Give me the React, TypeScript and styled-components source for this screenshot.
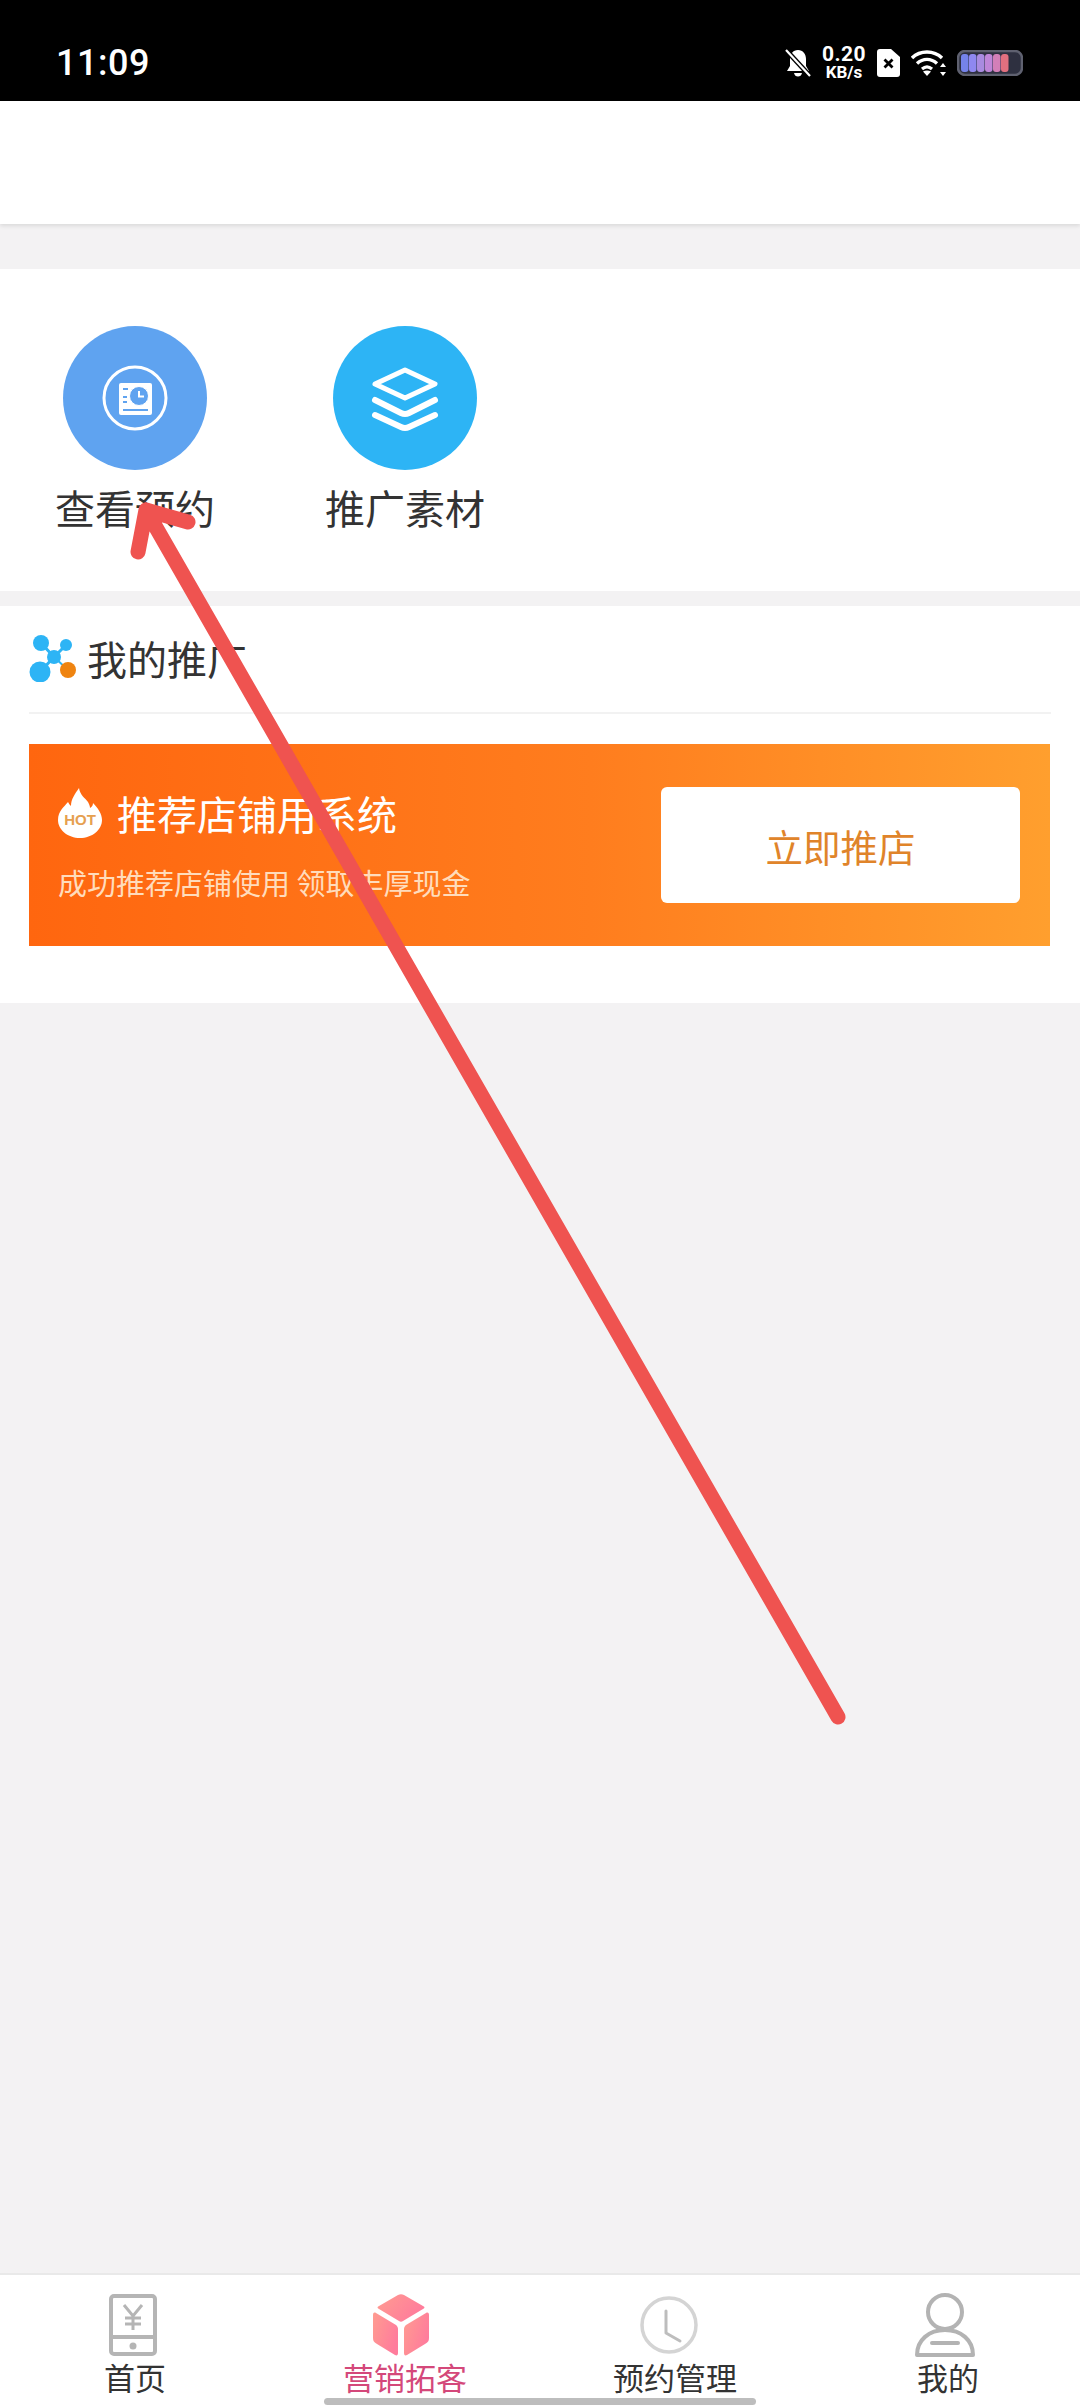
import React from "react";
import styled, { createGlobalStyle } from "styled-components";

const Global = createGlobalStyle`
  html, body { margin: 0; padding: 0; background: #f2f2f2; }
  * { box-sizing: border-box; }
  body { font-family: "Noto Sans CJK SC", "Noto Sans", sans-serif; }
`;

const Page = styled.div`
  position: relative;
  width: 1080px;
  height: 2408px;
  display: flex;
  flex-direction: column;
  overflow: hidden;
  background: #f3f2f3;
`;

const StatusBar = styled.div`
  height: 101px;
  background: #000;
  color: #fff;
  display: flex;
  align-items: center;
  justify-content: space-between;
  padding: 25px 57px 0 56px;
  flex-shrink: 0;
`;
const Time = styled.div`
  font-family: "Roboto", sans-serif;
  font-weight: 500;
  font-size: 36px;
  letter-spacing: 0.5px;
`;
const StatusIcons = styled.div`
  display: flex;
  align-items: center;
`;
const Speed = styled.div`
  display: flex;
  flex-direction: column;
  align-items: center;
  font-family: "Roboto", sans-serif;
  font-weight: 700;
  margin: 0 11px 0 11px;
  width: 44px;
`;
const SpeedValue = styled.span`
  font-size: 21px;
  line-height: 19px;
  letter-spacing: 0.5px;
`;
const SpeedUnit = styled.span`
  font-size: 17px;
  line-height: 17px;
`;
const WifiSlot = styled.div`
  display: flex;
  margin: 0 10px 0 11px;
`;

const Header = styled.div`
  height: 123px;
  background: #fff;
  box-shadow: 0 2px 4px rgba(0, 0, 0, 0.1);
  flex-shrink: 0;
`;

const Main = styled.main`
  flex: 1;
  min-height: 0;
`;

const Shortcuts = styled.section`
  margin-top: 45px;
  height: 322px;
  background: #fff;
  padding-top: 57px;
  display: grid;
  grid-template-columns: repeat(4, 270px);
  align-content: start;
`;
const Shortcut = styled.div`
  display: flex;
  flex-direction: column;
  align-items: center;
`;
const Round = styled.div<{ $bg: string }>`
  width: 144px;
  height: 144px;
  border-radius: 50%;
  background: ${(p) => p.$bg};
  display: flex;
`;
const ShortcutLabel = styled.div`
  margin-top: 15px;
  font-size: 40px;
  line-height: 44px;
  color: #333;
  white-space: nowrap;
`;

const Promo = styled.section`
  margin-top: 15px;
  height: 397px;
  background: #fff;
  padding: 0 29px;
`;
const PromoHeader = styled.div`
  height: 108px;
  border-bottom: 2px solid #f2f2f2;
  display: flex;
  align-items: center;
  gap: 11px;
  padding-bottom: 2px;
`;
const PromoTitle = styled.h2`
  margin: 0;
  font-weight: 400;
  font-size: 40px;
  line-height: 48px;
  color: #333;
`;
const Banner = styled.div`
  margin-top: 30px;
  height: 202px;
  width: 1021px;
  background: linear-gradient(90deg, #ff660f 0%, #ff7d1e 55%, #ff9f2e 100%);
  display: flex;
  align-items: center;
  justify-content: space-between;
  padding: 0 30px 0 29px;
`;
const BannerText = styled.div`
  display: flex;
  flex-direction: column;
  gap: 26px;
`;
const BannerTitleRow = styled.div`
  display: flex;
  align-items: center;
  gap: 15px;
  height: 50px;
  margin-top: -2px;
`;
const BannerTitle = styled.div`
  color: #fff;
  font-size: 40px;
  line-height: 50px;
`;
const BannerSub = styled.div`
  color: #ffdcbc;
  font-size: 29px;
  line-height: 36px;
  white-space: pre;
`;
const BannerButton = styled.button`
  width: 359px;
  height: 116px;
  border: none;
  border-radius: 6px;
  background: #fff;
  color: #e0842a;
  font-family: inherit;
  font-size: 37.5px;
`;

const TabBar = styled.nav`
  flex-shrink: 0;
  height: 135px;
  background: #fff;
  border-top: 2px solid #e9e9e9;
  padding-top: 19px;
  display: grid;
  grid-template-columns: repeat(4, 270px);
`;
const Tab = styled.div`
  display: flex;
  flex-direction: column;
  align-items: center;
`;
const TabIcon = styled.div<{ $nudge: number }>`
  height: 62px;
  display: flex;
  align-items: center;
  justify-content: center;
  margin-right: ${(p) => p.$nudge}px;
`;
const TabLabel = styled.div<{ $active?: boolean; $inset: number }>`
  margin-top: 5px;
  margin-left: ${(p) => p.$inset}px;
  font-size: 31px;
  line-height: 32px;
  white-space: nowrap;
  color: ${(p) => (p.$active ? "#d4487a" : "#333")};
`;
const HomeIndicator = styled.div`
  position: absolute;
  left: 324px;
  bottom: 3px;
  width: 432px;
  height: 7px;
  border-radius: 4px;
  background: #bdbdbd;
`;
const ArrowOverlay = styled.svg`
  position: absolute;
  left: 0;
  top: 0;
  pointer-events: none;
`;

const Bell = () => (
  <svg width="26" height="28" viewBox="0 0 26 28" fill="#fff">
    <path d="M13 1c5 0 8 4 8 9v7l3 5H2l3-5v-7c0-5 3-9 8-9zM9 24h8c-.5 2.500-2 3.500-4 3.500S9.500 26.500 9 24z" />
    <path d="M1 1l24 26" stroke="#000" strokeWidth="5" />
    <path d="M1 1l24 26" stroke="#fff" strokeWidth="2.200" />
  </svg>
);
const Sim = () => (
  <svg width="23" height="28" viewBox="0 0 23 28">
    <path d="M3 0h11l9 8v17a3 3 0 0 1-3 3H3a3 3 0 0 1-3-3V3a3 3 0 0 1 3-3z" fill="#fff" />
    <path d="M7.500 10.500l8 8M15.500 10.500l-8 8" stroke="#000" strokeWidth="2.800" />
  </svg>
);
const Wifi = () => (
  <svg width="36" height="28" viewBox="0 0 36 28" fill="none">
    <path d="M1 9c8-8 22-8 30 0" stroke="#fff" strokeWidth="3.400" />
    <path d="M6 14.500c6-5.500 14-5.500 20 0" stroke="#fff" strokeWidth="3.400" />
    <path d="M11 20c3.500-3 6.500-3 10 0" stroke="#fff" strokeWidth="3.200" />
    <path d="M16 27l-4-4.500c2.500-1.500 5.500-1.500 8 0z" fill="#fff" />
    <path d="M32 14l3 4h-6zM32 27l-3-4h6z" fill="#fff" />
  </svg>
);
const Battery = () => {
  const cells = ["#7583ea", "#8f88f0", "#a98be0", "#bf86d8", "#d37fb8", "#e2707f"];
  return (
    <svg width="66" height="26" viewBox="0 0 66 26">
      <rect x="1" y="1" width="64" height="24" rx="7" fill="#2e3040" stroke="#5f6170" strokeWidth="2.500" />
      {cells.map((c, i) => (
        <rect key={c} x={4 + i * 8} y="4" width="7.500" height="18" rx="3" fill={c} />
      ))}
    </svg>
  );
};

const BookingIcon = () => (
  <svg width="144" height="144" viewBox="0 0 144 144">
    <circle cx="72" cy="72" r="31" fill="none" stroke="#fff" strokeWidth="3" />
    <rect x="56" y="57" width="33" height="32" rx="2" fill="#fff" />
    <path d="M60 63h5M60 71h4M60 76h4M60 84h25" stroke="#5fa3f0" strokeWidth="1.800" />
    <circle cx="76" cy="70" r="9.500" fill="#5fa3f0" stroke="#fff" strokeWidth="1" />
    <path d="M76 65v5.500h5" fill="none" stroke="#fff" strokeWidth="2" />
  </svg>
);
const LayersIcon = () => (
  <svg width="144" height="144" viewBox="0 0 144 144" fill="none" stroke="#fff" strokeLinecap="round" strokeLinejoin="round">
    <path d="M72 44l30 14-30 14-30-14z" strokeWidth="5" />
    <path d="M42 74l26 13c3 1.500 5 1.500 8 0l26-13" strokeWidth="6" />
    <path d="M42 89l26 12c3 1.500 5 1.500 8 0l26-12" strokeWidth="6" />
  </svg>
);
const PromoLogo = () => (
  <svg width="47" height="47" viewBox="0 0 47 47">
    <path d="M12 8l13 14M37 10L25 22M11 37l14-15" stroke="#2db4f5" strokeWidth="3" />
    <path d="M25 22l14 13" stroke="#2db4f5" strokeWidth="2" />
    <circle cx="12" cy="8" r="8" fill="#2db4f5" />
    <circle cx="37" cy="10" r="6" fill="#2db4f5" />
    <circle cx="25" cy="22" r="7" fill="#2db4f5" />
    <circle cx="11" cy="37" r="10.500" fill="#2db4f5" />
    <circle cx="39" cy="35" r="8" fill="#ef8410" />
  </svg>
);
const HotIcon = () => (
  <svg width="44" height="50" viewBox="0 0 44 50">
    <path d="M21 0c1 7 6 10 9 14 1 2 2 4 2 6 2-1 3-3 3-5 5 5 9 11 9 17 0 10-10 18-22 18S0 42 0 32c0-9 6-13 10-18 1 2 2 3 3 4 0-7 4-12 8-18z" fill="#fff" />
    <text x="22" y="37" textAnchor="middle" fontFamily="Liberation Sans, sans-serif" fontWeight="700" fontSize="15" fill="#e6a050">HOT</text>
  </svg>
);

const HomeTabIcon = () => (
  <svg width="48" height="62" viewBox="0 0 48 62" fill="none" stroke="#b5b5b5">
    <rect x="2" y="2" width="44" height="58" rx="3" strokeWidth="4" />
    <path d="M2 43h44" strokeWidth="4" />
    <circle cx="24" cy="52" r="3.500" fill="#b5b5b5" stroke="none" />
    <path d="M15 11l9 11 9-11M24 22v14M16 24h16M16 30h16" strokeWidth="3" />
  </svg>
);
const CubeTabIcon = () => (
  <svg width="58" height="62" viewBox="0 0 58 62">
    <defs>
      <linearGradient id="cubeG" x1="0" y1="0" x2="1" y2="0.500">
        <stop offset="0" stopColor="#ff9c90" />
        <stop offset="1" stopColor="#ff7c9c" />
      </linearGradient>
    </defs>
    <path d="M26 1c2-1 4-1 6 0l19 11c2 1 2 2 0 3L31 27c-1 1-3 1-4 0L7 15c-2-1-2-2 0-3z" fill="url(#cubeG)" />
    <path d="M1 21c0-2 1-3 3-2l20 12c1 1 2 2 2 4v24c0 2-1 3-3 2L5 50c-3-2-4-3-4-6z" fill="url(#cubeG)" />
    <path d="M57 21c0-2-1-3-3-2L34 31c-1 1-2 2-2 4v24c0 2 1 3 3 2l18-11c3-2 4-3 4-6z" fill="url(#cubeG)" />
  </svg>
);
const ClockTabIcon = () => (
  <svg width="58" height="58" viewBox="0 0 58 58" fill="none" stroke="#d4d4d4">
    <circle cx="29" cy="29" r="27" strokeWidth="3.500" />
    <path d="M26 15v22l14 8" stroke="#bdbdbd" strokeWidth="3" strokeLinecap="round" strokeLinejoin="round" />
  </svg>
);
const UserTabIcon = () => (
  <svg width="60" height="64" viewBox="0 0 60 64" fill="none" stroke="#b3b3b3">
    <circle cx="30" cy="19" r="17" strokeWidth="4" />
    <path d="M2 62c0-15 12-25 28-25s28 10 28 25z" strokeWidth="4" strokeLinejoin="round" />
    <path d="M17 50h26" strokeWidth="4" strokeLinecap="round" />
  </svg>
);

const tabs = [
  { label: "首页", icon: <HomeTabIcon />, nudge: 4, inset: 0 },
  { label: "营销拓客", icon: <CubeTabIcon />, active: true, nudge: 8, inset: 0 },
  { label: "预约管理", icon: <ClockTabIcon />, nudge: 12, inset: 0 },
  { label: "我的", icon: <UserTabIcon />, nudge: 0, inset: 6 },
];

export default function App() {
  return (
    <Page>
      <Global />
      <StatusBar>
        <Time>11:09</Time>
        <StatusIcons>
          <Bell />
          <Speed>
            <SpeedValue>0.20</SpeedValue>
            <SpeedUnit>KB/s</SpeedUnit>
          </Speed>
          <Sim />
          <WifiSlot>
            <Wifi />
          </WifiSlot>
          <Battery />
        </StatusIcons>
      </StatusBar>
      <Header />
      <Main>
        <Shortcuts>
          <Shortcut>
            <Round $bg="#5fa3f0">
              <BookingIcon />
            </Round>
            <ShortcutLabel>查看预约</ShortcutLabel>
          </Shortcut>
          <Shortcut>
            <Round $bg="#2db4f5">
              <LayersIcon />
            </Round>
            <ShortcutLabel>推广素材</ShortcutLabel>
          </Shortcut>
        </Shortcuts>
        <Promo>
          <PromoHeader>
            <PromoLogo />
            <PromoTitle>我的推广</PromoTitle>
          </PromoHeader>
          <Banner>
            <BannerText>
              <BannerTitleRow>
                <HotIcon />
                <BannerTitle>推荐店铺用系统</BannerTitle>
              </BannerTitleRow>
              <BannerSub>成功推荐店铺使用 领取丰厚现金</BannerSub>
            </BannerText>
            <BannerButton>立即推店</BannerButton>
          </Banner>
        </Promo>
      </Main>
      <TabBar>
        {tabs.map((t) => (
          <Tab key={t.label}>
            <TabIcon $nudge={t.nudge}>{t.icon}</TabIcon>
            <TabLabel $active={t.active} $inset={t.inset}>{t.label}</TabLabel>
          </Tab>
        ))}
      </TabBar>
      <HomeIndicator />
      <ArrowOverlay width="1080" height="2408" viewBox="0 0 1080 2408" fill="none">
        <path d="M838 1717L146 510M146 510L138 552M146 510L188 522" stroke="#ef5350" strokeWidth="15" strokeLinecap="round" strokeLinejoin="round" />
      </ArrowOverlay>
    </Page>
  );
}
